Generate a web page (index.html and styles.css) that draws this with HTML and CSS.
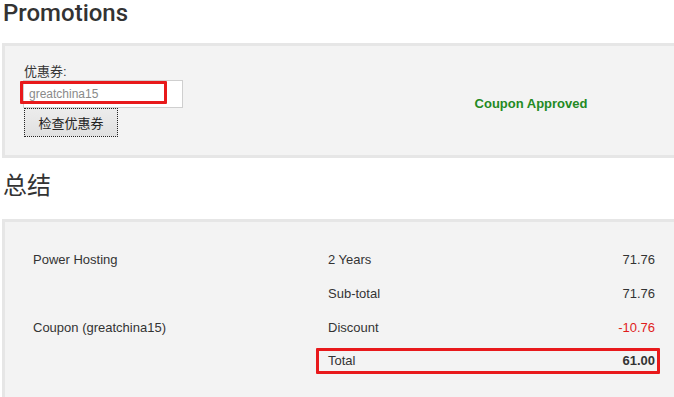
FILE: index.html
```html
<!DOCTYPE html>
<html lang="zh">
<head>
  <meta charset="UTF-8" />
  <title>Promotions</title>
  <link rel="stylesheet" href="styles.css">
</head>
<body>

<h2 class="title">Promotions</h2>

<div class="panel promo">
  <div class="promo-form">
    <label for="code">优惠券:</label>
    <div class="field">
      <input id="code" type="text" value="greatchina15" />
      <span class="mark mark-input"></span>
    </div>
    <button type="button">检查优惠券</button>
  </div>
  <div class="promo-status">Coupon Approved</div>
</div>

<h2 class="title title-cn">总结</h2>

<div class="panel summary">
  <div class="row">
    <span>Power Hosting</span>
    <span>2 Years</span>
    <span class="num">71.76</span>
  </div>
  <div class="row">
    <span></span>
    <span>Sub-total</span>
    <span class="num">71.76</span>
  </div>
  <div class="row">
    <span>Coupon (greatchina15)</span>
    <span>Discount</span>
    <span class="num minus">-10.76</span>
  </div>
  <div class="row">
    <span></span>
    <div class="total">
      <span>Total</span>
      <span class="num strong">61.00</span>
    </div>
  </div>
</div>

</body>
</html>
```

FILE: styles.css
```css
body {
  margin: 0;
  padding-left: 2px;
  background: #fff;
  color: #333;
  font-family: "Liberation Sans", Arial, "Noto Sans CJK SC", sans-serif;
  font-size: 13px;
  overflow: hidden;
}

.title {
  margin: 0;
  padding-left: 1px;
  font-family: Roboto, "Liberation Sans", sans-serif;
  font-weight: 500;
  font-size: 24px;
  line-height: 26px;
  color: #333;
}
.title-cn {
  font-family: "Noto Sans CJK SC", sans-serif;
  font-weight: 400;
  font-size: 24px;
  line-height: 32px;
}

.panel {
  background: #f3f3f3;
  border: 3px solid #e6e6e6;
  border-right: none;
}

/* promotions */
.promo {
  margin: 17px 0 10px;
  height: 109px;
  display: grid;
  grid-template-columns: 383px 1fr;
  align-items: center;
}
.promo-form {
  padding-left: 19px;
  display: flex;
  flex-direction: column;
  align-items: flex-start;
}
.promo-form label { line-height: 16px; }
.field { position: relative; }
.field input {
  display: block;
  box-sizing: border-box;
  width: 160px; height: 28px;
  margin: 0 0 0 -1px;
  padding: 0 5px;
  border: 1px solid #cfcfcf;
  background: #fff;
  font-family: "Liberation Sans", Arial, sans-serif;
  font-size: 12px;
  color: #8a8a8a;
}
.mark {
  position: absolute;
  border: 3px solid #e8191b;
  border-radius: 1px;
}
.mark-input { left: -4px; top: 1px; width: 141px; height: 17px; }

.promo-form button {
  box-sizing: border-box;
  width: 94px; height: 29px;
  border: 1px dotted #222;
  background: linear-gradient(#ececec, #e0e0e0);
  font-family: "Noto Sans CJK SC", sans-serif;
  font-size: 13px;
  color: #222;
  padding: 0;
}
.promo-status {
  text-align: center;
  font-weight: bold;
  color: #238a23;
  padding-top: 5px;
}

/* summary */
.summary {
  margin-top: 19px;
  padding: 20px 19px 20px 28px;
}
.row {
  display: grid;
  grid-template-columns: 295px 1fr 80px;
  height: 34px;
  align-items: center;
}
.num { text-align: right; }
.minus { color: #e01c1c; }
.strong { font-weight: bold; }
.total {
  grid-column: 2 / 4;
  display: flex;
  justify-content: space-between;
  height: 20px;
  line-height: 20px;
  margin: 0 -5px 0 -12px;
  padding: 0 2px 0 9px;
  border: 3px solid #e8191b;
  border-radius: 1px;
}
```
